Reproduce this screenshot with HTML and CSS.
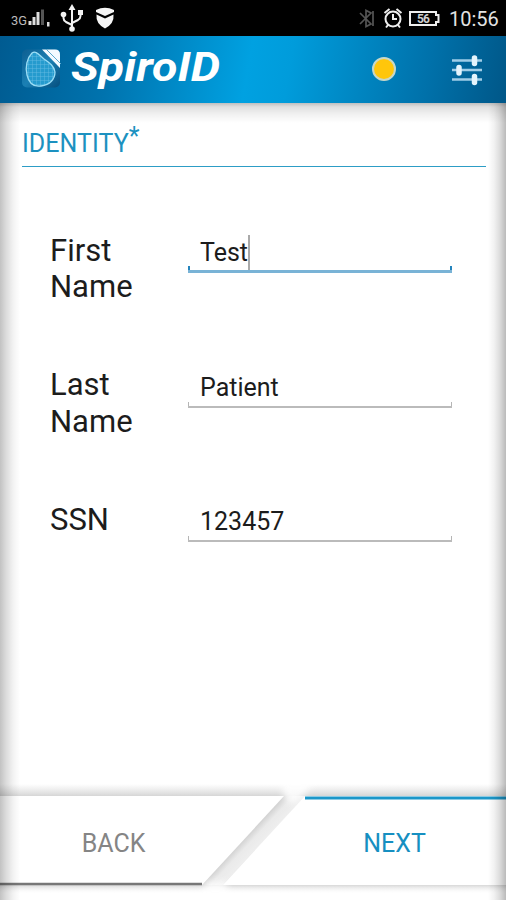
FILE: index.html
```html
<!DOCTYPE html>
<html lang="en">
<head>
<meta charset="utf-8">
<title>SpiroID</title>
<link rel="stylesheet" href="styles.css">
</head>
<body>
<div class="screen">
  <div class="status">
    <svg class="status-icons" width="130" height="36" viewBox="0 0 130 36">
      <text class="net" x="11" y="24.500" textLength="16" lengthAdjust="spacingAndGlyphs">3G</text>
      <g fill="#ddd">
        <path d="M28.500 21h3v4h-3zM32.500 17h3v8h-3zM36.500 12h3v13h-3z"/>
        <path fill="#555" d="M41 9.500h3V25h-3z"/>
        <path d="M47 22h2.500v4.500H47z"/>
      </g>
      <g fill="none" stroke="#f2f2f2" stroke-width="2">
        <path d="M72 8v21M72 25l-6-3q-2.500-1.500-2.500-4v-3M72 23l6-3q2.500-1.500 2.500-4v-3"/>
        <path fill="#f2f2f2" stroke="none" d="M72 4l3.500 6h-7zM78 10h5v5h-5z"/>
        <circle cx="72" cy="29" r="2.800" fill="#f2f2f2" stroke="none"/>
        <circle cx="63.500" cy="14.500" r="2.800" fill="#f2f2f2" stroke="none"/>
      </g>
      <path fill="#f5f5f5" d="M96 10q9-4.500 18 0v2l-9 4-9-4z"/>
      <path fill="#f5f5f5" d="M96.500 14.500l8.500 4 8.500-4q1 9-8.500 14-9.500-5-8.500-14z"/>
    </svg>
    <svg class="status-icons" width="90" height="36" viewBox="356 0 90 36">
      <path fill="none" stroke="#555" stroke-width="1.700" d="M360 13l11 11-5 2.500V10.500l5 2.500-11 11M373 11v15"/>
      <g fill="none" stroke="#eee" stroke-width="2">
        <circle cx="393" cy="19" r="7.500"/>
        <path d="M393 14v5h4M384.500 13l5-4M401.500 13l-5-4M388 25l-2 2.500M398 25l2 2.500"/>
        <path d="M410 12h26v3h2.500v7H436v3h-26z"/>
      </g>
      <text class="battery" x="417" y="23" textLength="13">56</text>
    </svg>
    <span class="clock">10:56</span>
  </div>
  <header class="header">
    <svg class="logo" width="204" height="67" viewBox="20 36 204 67">
      <defs>
        <linearGradient id="tile" x2="1" y2="1"><stop stop-color="#0d5f92"/><stop offset=".5" stop-color="#1b80b4"/><stop offset="1" stop-color="#064f7e"/></linearGradient>
        <pattern id="mesh" width="4" height="4" patternUnits="userSpaceOnUse"><path d="M0 0h4M0 0v4" stroke="#6bbfe4" stroke-width=".8"/></pattern>
      </defs>
      <rect x="22" y="49.500" width="38" height="38" rx="5" fill="url(#tile)"/>
      <path d="M32 53c-5 5-7 14-5 22 2 9 7 12 14 11 9-1 14-7 14-14-1-6-5-9-11-13-5-4-8-9-12-6z" fill="#259bce"/>
      <path d="M32 53c-5 5-7 14-5 22 2 9 7 12 14 11 9-1 14-7 14-14-1-6-5-9-11-13-5-4-8-9-12-6z" fill="url(#mesh)" stroke="#9bddf5" stroke-width="1.300"/>
      <path d="M42 49.500h13q5 0 5 5V68z" fill="#f4faff"/>
      <path d="M46 49l15 15" stroke="#5aa9cf" stroke-width="1"/>
      <text class="brand" x="71" y="81" textLength="149" lengthAdjust="spacingAndGlyphs">SpiroID</text>
    </svg>
    <div class="actions">
      <span class="dot"></span>
      <svg width="32" height="32" viewBox="0 0 32 32">
        <path d="M1 6.500h30M1 16h30M1 25.500h30" stroke="#9fcde7" stroke-width="2.400"/>
        <path d="M23.500 4v5.500M8 13.500v5.500M23.500 22.500v6" stroke="#e4f4fc" stroke-width="5.500" stroke-linecap="round"/>
      </svg>
    </div>
  </header>
  <main class="content">
    <h1 class="title">IDENTITY<span class="star">*</span></h1>
    <form class="fields">
      <div class="row"><label class="label">First<br>Name</label><div class="field active"><span class="value caret">Test</span></div></div>
      <div class="row"><label class="label">Last<br>Name</label><div class="field"><span class="value">Patient</span></div></div>
      <div class="row"><label class="label">SSN</label><div class="field"><span class="value">123457</span></div></div>
    </form>
    <nav class="nav">
      <svg class="nav-shape" width="506" height="120" viewBox="0 780 506 120">
        <defs>
          <filter id="soft" x="-50%" y="-50%" width="200%" height="200%"><feGaussianBlur stdDeviation="3.500"/></filter>
          <linearGradient id="top" x2="0" y2="1"><stop stop-color="#ddd" stop-opacity="0"/><stop offset="1" stop-color="#d6d6d6"/></linearGradient>
          <linearGradient id="low" x2="0" y2="1"><stop stop-color="#d8d8d8"/><stop offset="1" stop-color="#fff" stop-opacity="0"/></linearGradient>
          <linearGradient id="band" gradientUnits="userSpaceOnUse" x1="244" y1="840" x2="259" y2="854"><stop stop-color="#d4d4d4"/><stop offset=".3" stop-color="#eaeaea"/><stop offset=".7" stop-color="#eee"/><stop offset="1" stop-color="#d0d0d0"/></linearGradient>
        </defs>
        <path d="M0 784h506v12H0z" fill="url(#top)"/>
        <path d="M284 796h21l-82 89h-21z" fill="url(#band)"/>
        <path d="M0 885h506v9H0z" fill="url(#low)"/>
        <path d="M282 780h30l-6 14-12 10-10-6z" fill="#fff" opacity=".85" filter="url(#soft)"/>
        <path d="M206 882h20l2 14h-26z" fill="#fff" opacity=".85" filter="url(#soft)"/>
        <path d="M0 884h202" stroke="#777" stroke-width="2.400"/>
        <path d="M305 798h201" stroke="#1c97c9" stroke-width="3"/>
      </svg>
      <button class="btn back" type="button">BACK</button>
      <button class="btn next" type="button">NEXT</button>
    </nav>
  </main>
</div>
</body>
</html>
```
FILE: styles.css
```css
* { box-sizing: border-box; }
body { margin: 0; font-family: Roboto, "Liberation Sans", sans-serif; background: #fff; }
.screen { width: 506px; height: 900px; display: flex; flex-direction: column; overflow: hidden; }
.status { height: 36px; flex: none; background: #000; display: flex; justify-content: space-between; align-items: center; }
.status-icons { display: block; }
.status-icons:first-child { margin-right: auto; }
.net { font: 400 12px Roboto, sans-serif; fill: #bbb; }
.battery { font: 700 12px Roboto, sans-serif; fill: #ccc; }
.clock { width: 60px; padding: 2px 0 0 3px; font-size: 20px; color: #e2e2e2; line-height: 34px; }
.header {
  height: 67px; flex: none; display: flex; justify-content: space-between; align-items: center;
  padding: 0 23px 0 20px;
  background: linear-gradient(100deg, #005b91 0%, #0073ae 22%, #00a1e1 49%, #009cdb 57%, #0071aa 84%, #005788 100%);
}
.logo { display: block; }
.brand { font: italic 700 40px Roboto, sans-serif; fill: #fff; }
.actions { display: flex; align-items: center; gap: 55px; }
.dot { width: 24px; height: 24px; margin-top: -2px; border-radius: 50%; background: #ffc60b; border: 2px solid #c8d8c8; }
.content {
  flex: 1; display: flex; flex-direction: column; position: relative; padding: 23px 0 0;
}
.content::after {
  content: ""; position: absolute; inset: 0; pointer-events: none;
  background:
    linear-gradient(to bottom, rgba(0,0,0,.25), rgba(0,0,0,.12) 4px, rgba(0,0,0,.06) 11px, transparent 20px),
    linear-gradient(to right, rgba(0,0,0,.24), rgba(0,0,0,.14) 6px, rgba(0,0,0,.05) 13px, transparent 20px),
    linear-gradient(to left, rgba(0,0,0,.27), rgba(0,0,0,.14) 6px, rgba(0,0,0,.05) 12px, transparent 18px);
}
.title {
  margin: 0 20px 0 22px; height: 41px; border-bottom: 1.5px solid #2d9dc6;
  font-size: 25px; font-weight: 400; line-height: 35px; color: #1c91c0; letter-spacing: .05px;
}
.star { display: inline-block; line-height: 20px; transform: translateY(-7px); }
.fields { flex: 1; padding: 65px 54px 0 50px; }
.row { height: 134.500px; display: flex; justify-content: space-between; }
.label { font-size: 31px; line-height: 36.500px; padding-top: .5px; color: #1c1c1c; }
.field { width: 264px; height: 41px; padding-left: 12px; position: relative; border-bottom: 2px solid #bbb; }
.field::after {
  content: ""; position: absolute; left: 0; right: 0; bottom: 0; height: 4px;
  border: solid #b5b5b5; border-width: 0 1px;
}
.field.active { border-bottom: 3px solid #79b3d6; }
.field.active::after { border-color: #2484bd; border-width: 0 2px; }
.value { display: inline-block; font-size: 25px; line-height: 36px; margin-top: 3px; color: #1c1c1c; }
.caret { line-height: 35px; border-right: 2px solid #aaa; margin-right: -2px; }
.nav { height: 120px; flex: none; display: flex; position: relative; }
.nav-shape { position: absolute; inset: 0; }
.btn { position: relative; border: 0; background: none; padding: 6px 0 0; font: 400 25px Roboto, sans-serif; }
.back { width: 227px; color: #858585; }
.next { width: 279px; padding-left: 56px; color: #168fc1; }
```
